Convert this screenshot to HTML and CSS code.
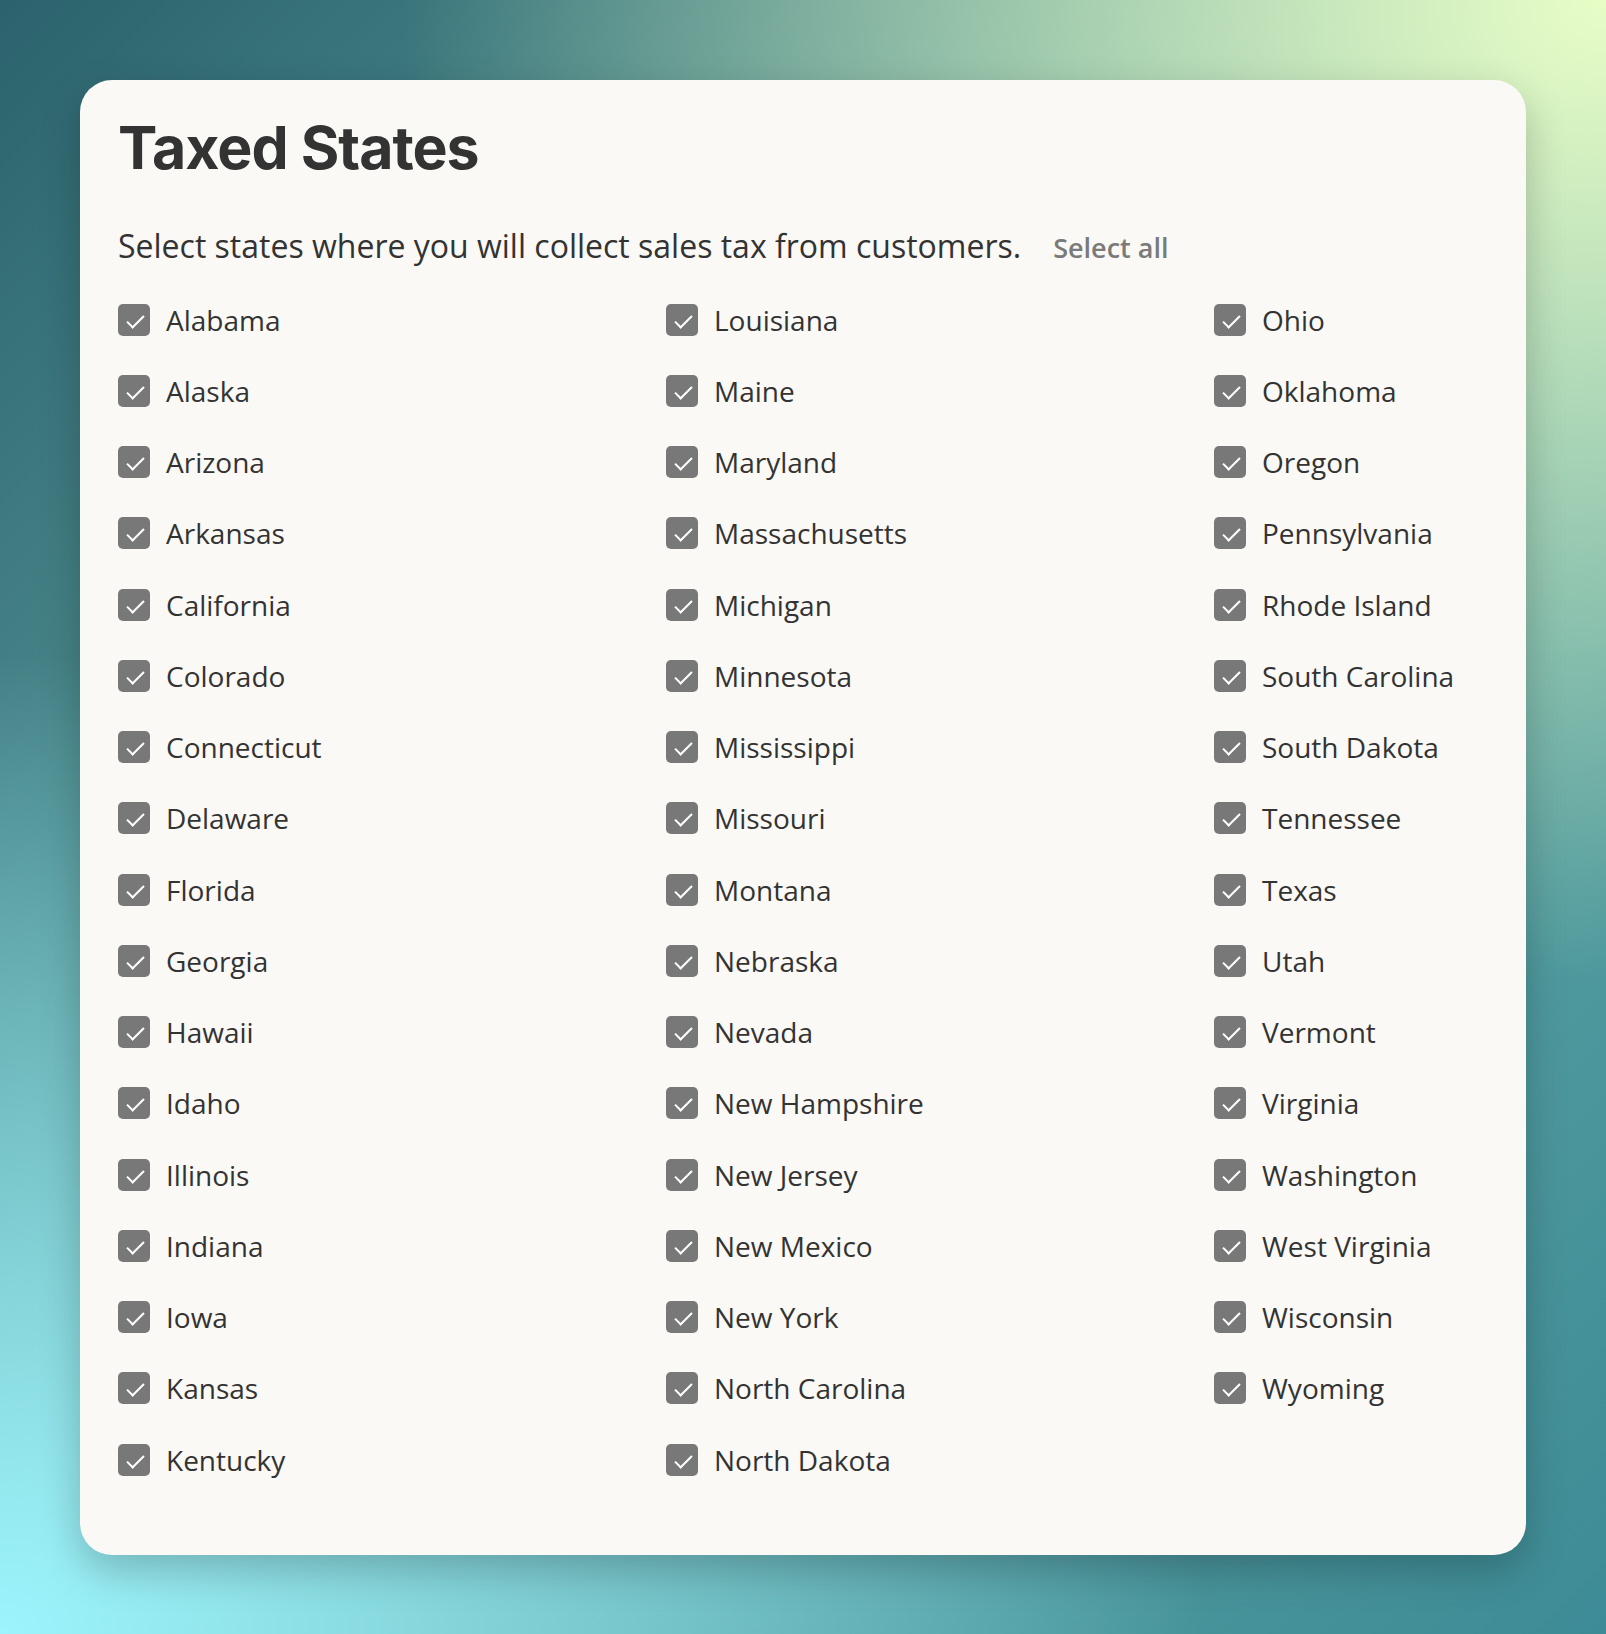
FILE: index.html
```html
<!DOCTYPE html>
<html lang="en">
<head>
    <meta charset="UTF-8">
    <meta name="viewport" content="width=device-width, initial-scale=1.0">
    <title>Taxed States</title>
    <link rel="stylesheet" href="styles.css">
</head>
<body>
    <div class="card">
        <h1>Taxed States</h1>

        <div class="intro">
            <p>Select states where you will collect sales tax from customers.</p>
            <a href="#" class="select-all">Select all</a>
        </div>

        <!-- Lista de estados -->
        <div class="states">
            <label class="state"><input type="checkbox" checked><span>Alabama</span></label>
            <label class="state"><input type="checkbox" checked><span>Alaska</span></label>
            <label class="state"><input type="checkbox" checked><span>Arizona</span></label>
            <label class="state"><input type="checkbox" checked><span>Arkansas</span></label>
            <label class="state"><input type="checkbox" checked><span>California</span></label>
            <label class="state"><input type="checkbox" checked><span>Colorado</span></label>
            <label class="state"><input type="checkbox" checked><span>Connecticut</span></label>
            <label class="state"><input type="checkbox" checked><span>Delaware</span></label>
            <label class="state"><input type="checkbox" checked><span>Florida</span></label>
            <label class="state"><input type="checkbox" checked><span>Georgia</span></label>
            <label class="state"><input type="checkbox" checked><span>Hawaii</span></label>
            <label class="state"><input type="checkbox" checked><span>Idaho</span></label>
            <label class="state"><input type="checkbox" checked><span>Illinois</span></label>
            <label class="state"><input type="checkbox" checked><span>Indiana</span></label>
            <label class="state"><input type="checkbox" checked><span>Iowa</span></label>
            <label class="state"><input type="checkbox" checked><span>Kansas</span></label>
            <label class="state"><input type="checkbox" checked><span>Kentucky</span></label>
            <label class="state"><input type="checkbox" checked><span>Louisiana</span></label>
            <label class="state"><input type="checkbox" checked><span>Maine</span></label>
            <label class="state"><input type="checkbox" checked><span>Maryland</span></label>
            <label class="state"><input type="checkbox" checked><span>Massachusetts</span></label>
            <label class="state"><input type="checkbox" checked><span>Michigan</span></label>
            <label class="state"><input type="checkbox" checked><span>Minnesota</span></label>
            <label class="state"><input type="checkbox" checked><span>Mississippi</span></label>
            <label class="state"><input type="checkbox" checked><span>Missouri</span></label>
            <label class="state"><input type="checkbox" checked><span>Montana</span></label>
            <label class="state"><input type="checkbox" checked><span>Nebraska</span></label>
            <label class="state"><input type="checkbox" checked><span>Nevada</span></label>
            <label class="state"><input type="checkbox" checked><span>New Hampshire</span></label>
            <label class="state"><input type="checkbox" checked><span>New Jersey</span></label>
            <label class="state"><input type="checkbox" checked><span>New Mexico</span></label>
            <label class="state"><input type="checkbox" checked><span>New York</span></label>
            <label class="state"><input type="checkbox" checked><span>North Carolina</span></label>
            <label class="state"><input type="checkbox" checked><span>North Dakota</span></label>
            <label class="state"><input type="checkbox" checked><span>Ohio</span></label>
            <label class="state"><input type="checkbox" checked><span>Oklahoma</span></label>
            <label class="state"><input type="checkbox" checked><span>Oregon</span></label>
            <label class="state"><input type="checkbox" checked><span>Pennsylvania</span></label>
            <label class="state"><input type="checkbox" checked><span>Rhode Island</span></label>
            <label class="state"><input type="checkbox" checked><span>South Carolina</span></label>
            <label class="state"><input type="checkbox" checked><span>South Dakota</span></label>
            <label class="state"><input type="checkbox" checked><span>Tennessee</span></label>
            <label class="state"><input type="checkbox" checked><span>Texas</span></label>
            <label class="state"><input type="checkbox" checked><span>Utah</span></label>
            <label class="state"><input type="checkbox" checked><span>Vermont</span></label>
            <label class="state"><input type="checkbox" checked><span>Virginia</span></label>
            <label class="state"><input type="checkbox" checked><span>Washington</span></label>
            <label class="state"><input type="checkbox" checked><span>West Virginia</span></label>
            <label class="state"><input type="checkbox" checked><span>Wisconsin</span></label>
            <label class="state"><input type="checkbox" checked><span>Wyoming</span></label>
        </div>
    </div>
</body>
</html>
```

FILE: styles.css
```css
* {
    margin: 0;
    padding: 0;
    box-sizing: border-box;
}

body {
    font-family: "Open Sans", Arial, sans-serif;
    color: #333;
    min-height: 100vh;
    padding: 80px;
    background:
        radial-gradient(ellipse 75% 60% at 100% 0%, #e8fdc6 0%, rgba(232, 253, 198, 0) 100%),
        radial-gradient(ellipse 75% 60% at 0% 100%, #9df4fc 0%, rgba(157, 244, 252, 0) 100%),
        linear-gradient(135deg, #2b626d 0%, #64aaa6 50%, #3d8b96 100%);
}

.card {
    background-color: #faf9f6;
    border-radius: 32px;
    padding: 32px 38px 60px;
    box-shadow: 0 16px 40px rgba(0, 0, 0, 0.22);
}

.card h1 {
    font-family: Inter, "Open Sans", sans-serif;
    font-weight: 700;
    font-size: 59px;
    line-height: 1.22;
    letter-spacing: -1px;
}

.intro {
    display: flex;
    align-items: baseline;
    gap: 32px;
    margin-top: 40px;
}

.intro p {
    font-size: 32px;
}

.select-all {
    font-size: 27px;
    font-weight: 600;
    color: #7a7a7a;
    text-decoration: none;
}

.states {
    display: grid;
    grid-template-columns: 548px 548px auto;
    grid-template-rows: repeat(17, 71.25px);
    grid-auto-flow: column;
    margin-top: 17px;
}

.state {
    display: flex;
    align-items: center;
    gap: 16px;
    font-size: 28px;
    cursor: pointer;
}

.state input {
    appearance: none;
    position: relative;
    flex-shrink: 0;
    width: 32px;
    height: 32px;
    border-radius: 5px;
    background-color: #787878;
    cursor: pointer;
}

.state input:checked::after {
    content: "";
    position: absolute;
    left: 13px;
    top: 7px;
    width: 7px;
    height: 15px;
    border-right: 2px solid #fff;
    border-bottom: 2px solid #fff;
    transform: rotate(45deg);
}
```
